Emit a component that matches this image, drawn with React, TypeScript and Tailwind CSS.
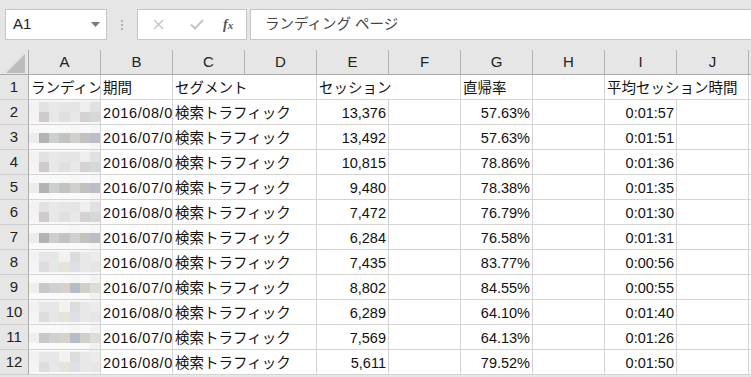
import React from "react";

const FONT = { fontFamily: '"Liberation Sans", "Noto Sans CJK JP", sans-serif' };

type Row = { n: number; b: string; e: string; g: string; i: string; p: number };

const rows: Row[] = [
  { n: 2, b: "2016/08/01 - 2016/08/31", e: "13,376", g: "57.63%", i: "0:01:57", p: 0 },
  { n: 3, b: "2016/07/01 - 2016/07/31", e: "13,492", g: "57.63%", i: "0:01:51", p: 1 },
  { n: 4, b: "2016/08/01 - 2016/08/31", e: "10,815", g: "78.86%", i: "0:01:36", p: 0 },
  { n: 5, b: "2016/07/01 - 2016/07/31", e: "9,480", g: "78.38%", i: "0:01:35", p: 1 },
  { n: 6, b: "2016/08/01 - 2016/08/31", e: "7,472", g: "76.79%", i: "0:01:30", p: 0 },
  { n: 7, b: "2016/07/01 - 2016/07/31", e: "6,284", g: "76.58%", i: "0:01:31", p: 1 },
  { n: 8, b: "2016/08/01 - 2016/08/31", e: "7,435", g: "83.77%", i: "0:00:56", p: 2 },
  { n: 9, b: "2016/07/01 - 2016/07/31", e: "8,802", g: "84.55%", i: "0:00:55", p: 3 },
  { n: 10, b: "2016/08/01 - 2016/08/31", e: "6,289", g: "64.10%", i: "0:01:40", p: 2 },
  { n: 11, b: "2016/07/01 - 2016/07/31", e: "7,569", g: "64.13%", i: "0:01:26", p: 3 },
  { n: 12, b: "2016/08/01 - 2016/08/31", e: "5,611", g: "79.52%", i: "0:01:50", p: 2 },
];

const patterns: [number, string[]][][] = [
  [
    [2, ["#f6f6f6", "#f6f6f6", "#f6f6f6", "#f6f6f6", "#f6f6f6", "#f6f6f6", "#f2f2f2"]],
    [10, ["#f2f2f2", "#e2e2e2", "#e7e9e9", "#e6e6e6", "#e5e5e5", "#efefef", "#e1e1e3"]],
    [10, ["#f4f4f4", "#cfcbcc", "#e7e9e9", "#e1dfdf", "#e7e9e9", "#d6d2d3", "#d6d7db"]],
    [2, ["#f8f8f8", "#f8f8f8", "#f8f8f8", "#f8f8f8", "#f8f8f8", "#f8f8f8", "#f6f6f6"]],
  ],
  [
    [8, ["#f8f8f8", "#f9f9f9", "#f9f9f9", "#f8f8f8", "#f6f6f6", "#f9f9f9", "#f7f7f7"]],
    [10, ["#ececec", "#b3b3b3", "#ccd0cc", "#c3c3c3", "#d0d0cc", "#c4c0bf", "#bcbdc6"]],
    [6, ["#fafafa", "#fafafa", "#fafafa", "#fafafa", "#fafafa", "#fafafa", "#f6f6f6"]],
  ],
  [
    [2, ["#f6f6f6", "#f6f6f6", "#f6f6f6", "#f6f6f6", "#f6f6f6", "#f6f6f6", "#f2f2f2"]],
    [10, ["#f2f2f2", "#e7e7e7", "#e6e8e8", "#f4f2ee", "#dadcde", "#e8e8e8", "#ebebeb"]],
    [10, ["#f4f4f4", "#dedce0", "#e6e8e8", "#e6e2dc", "#dde0e6", "#e8e8e8", "#e6e6e6"]],
    [2, ["#f8f8f8", "#f8f8f8", "#f8f8f8", "#f8f8f8", "#f8f8f8", "#f8f8f8", "#f6f6f6"]],
  ],
  [
    [8, ["#f8f8f8", "#f9f9f9", "#f9f9f9", "#f8f8f8", "#f6f6f6", "#f9f9f9", "#f3f3f3"]],
    [10, ["#efefeb", "#cbc7c9", "#cfd0d0", "#d6d2c9", "#b6bcc6", "#cfcfcb", "#dedcd6"]],
    [6, ["#fafafa", "#fafafa", "#fafafa", "#fafafa", "#fafafa", "#fafafa", "#f2f2f2"]],
  ],
];

function Mosaic({ p }: { p: number }) {
  return (
    <div className="w-[72px] h-[25px] shrink-0 border-r border-b border-[#d4d4d4] bg-white flex flex-col">
      {patterns[p].map(([h, cols], k) => (
        <div key={k} className="flex" style={{ height: h }}>
          {cols.map((c, j) => (
            <div key={j} className="flex-1" style={{ background: c }} />
          ))}
        </div>
      ))}
    </div>
  );
}

function Cell({
  children,
  w = "w-[72px]",
  right = false,
  extra = "",
}: {
  children?: React.ReactNode;
  w?: string;
  right?: boolean;
  extra?: string;
}) {
  return (
    <div
      className={`${w} h-[25px] shrink-0 border-r border-b border-[#d4d4d4] bg-white overflow-hidden whitespace-nowrap flex items-center text-[14.5px] leading-[24px] text-[#111] pt-[1px] ${
        right ? "justify-end pr-[2px]" : "pl-[2px]"
      } ${extra}`}
    >
      {children}
    </div>
  );
}

function RowHead({ n }: { n: number }) {
  return (
    <div className="w-[29px] h-[25px] shrink-0 bg-[#e6e6e6] border-r border-r-[#ababab] border-b border-b-[#cfcfcf] flex items-center justify-center text-[15px] text-[#222] pt-[1px]">
      {n}
    </div>
  );
}

export default function App() {
  const letters = ["A", "B", "C", "D", "E", "F", "G", "H", "I", "J"];
  return (
    <div className="w-[751px] h-[377px] overflow-hidden bg-[#e6e6e6]" style={FONT}>
      {/* formula bar */}
      <div className="h-[50px] flex items-start pt-[9px] pl-[5px]">
        <div className="w-[102px] h-[31px] bg-white border border-[#c6c6c6] flex items-center justify-between pl-[7px] pr-[6px] text-[15px] text-[#222]">
          <span>A1</span>
          <svg width="9" height="5" viewBox="0 0 9 5">
            <path d="M0 0 L9 0 L4.5 5 Z" fill="#7a7a7a" />
          </svg>
        </div>
        <div className="w-[30px] h-[31px] flex flex-col items-center justify-center gap-[2px]">
          <div className="w-[2px] h-[2px] bg-[#b0b0b0]" />
          <div className="w-[2px] h-[2px] bg-[#b0b0b0]" />
          <div className="w-[2px] h-[2px] bg-[#b0b0b0]" />
        </div>
        <div className="w-[110px] h-[31px] bg-white border border-[#c6c6c6] flex items-center">
          <svg className="ml-[15px]" width="11" height="11" viewBox="0 0 11 11">
            <path d="M1 1 L10 10 M10 1 L1 10" stroke="#c4c4c4" strokeWidth="1.4" />
          </svg>
          <svg className="ml-[26px]" width="14" height="11" viewBox="0 0 14 11">
            <path d="M1 5.5 L5 9.5 L13 1" stroke="#c4c4c4" strokeWidth="2" fill="none" />
          </svg>
          <span
            className="ml-[19px] text-[14px] italic font-bold text-[#555] leading-none"
            style={{ fontFamily: '"Liberation Serif", serif' }}
          >
            f<span className="text-[11px]">x</span>
          </span>
        </div>
        <div className="ml-[3px] flex-1 h-[31px] bg-white border border-[#c6c6c6] border-r-0 flex items-center pl-[14px] text-[14.5px] text-[#444]">
          ランディング ページ
        </div>
      </div>

      {/* column header */}
      <div className="flex h-[25px] border-b border-[#ababab] bg-[#e6e6e6]">
        <div className="w-[29px] h-full shrink-0 border-r border-[#ababab] flex items-end justify-end pr-[3px] pb-[1px]">
          <svg width="19" height="19" viewBox="0 0 19 19">
            <path d="M19 0 L19 19 L0 19 Z" fill="#bcbcbc" />
          </svg>
        </div>
        {letters.map((l) => (
          <div
            key={l}
            className="w-[72px] h-full shrink-0 border-r border-[#b4b4b4] flex items-center justify-center text-[15px] text-[#222]"
          >
            {l}
          </div>
        ))}
        <div className="flex-1" />
      </div>

      {/* row 1 */}
      <div className="flex">
        <RowHead n={1} />
        <Cell>ランディング ページ</Cell>
        <Cell>期間</Cell>
        <Cell w="w-[144px]">セグメント</Cell>
        <Cell w="w-[144px]">セッション</Cell>
        <Cell>直帰率</Cell>
        <Cell />
        <Cell w="w-[144px]">平均セッション時間</Cell>
        <Cell w="flex-1" />
      </div>

      {rows.map((r) => (
        <div key={r.n} className="flex">
          <RowHead n={r.n} />
          <Mosaic p={r.p} />
          <Cell extra="tracking-[0.6px]">{r.b}</Cell>
          <Cell w="w-[144px]">検索トラフィック</Cell>
          <Cell right>{r.e}</Cell>
          <Cell />
          <Cell right>{r.g}</Cell>
          <Cell />
          <Cell right>{r.i}</Cell>
          <Cell />
          <Cell w="flex-1" />
        </div>
      ))}
    </div>
  );
}
